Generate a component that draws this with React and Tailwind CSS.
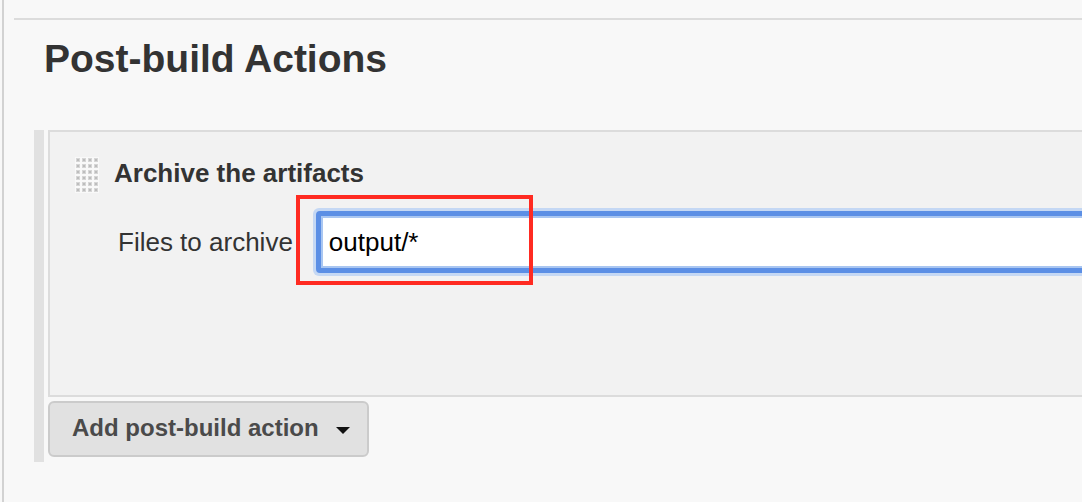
import React from "react";

function Handle() {
  const dots = [];
  for (let r = 0; r < 6; r++) {
    for (let c = 0; c < 4; c++) {
      dots.push(
        <g key={`${r}-${c}`}>
          <rect x={c * 6 + 1} y={r * 6 + 1} width="4" height="4" fill="#d6d6d6" />
          <rect x={c * 6 + 2} y={r * 6 + 2} width="2" height="2" fill="#bdbdbd" />
        </g>
      );
    }
  }
  return (
    <svg width="24" height="36" viewBox="0 0 24 36" className="shrink-0">
      <rect x="0" y="0" width="24" height="36" fill="#f9f9f9" />
      {dots}
    </svg>
  );
}

export default function App() {
  return (
    <div
      className="relative flex w-[1082px] h-[502px] overflow-hidden bg-[#f8f8f8]"
      style={{ fontFamily: '"Liberation Sans", Arial, sans-serif' }}
    >
      <div className="ml-[2px] w-[2px] shrink-0 bg-[#d2d2d2]" />
      <div className="flex min-w-0 flex-1 flex-col pl-[10px] pt-[18px]">
        <div className="h-[2px] bg-[#dcdcdc]" />
        <h1 className="ml-[30px] mt-[19px] text-[39px] font-bold leading-[39px] text-[#333333]">
          Post-build Actions
        </h1>
        <div className="ml-[20px] mt-[52px] flex">
          <div className="w-[10px] shrink-0 bg-[#e1e1e1]" />
          <div className="ml-[4px] flex w-[1100px] shrink-0 flex-col pb-[5px]">
            <div className="h-[267px] border-2 border-[#dcdcdc] bg-[#f2f2f2] pl-[25px] pt-[25px]">
              <div className="flex items-start">
                <Handle />
                <div className="ml-[15px] mt-[3px] text-[26px] font-bold leading-[26px] text-[#333333]">
                  Archive the artifacts
                </div>
              </div>
              <div className="mt-[15px] flex items-center">
                <label className="ml-[43px] text-[26px] leading-[26px] text-[#333333]">
                  Files to archive
                </label>
                <div className="ml-[20px] flex-1 rounded-[6px] bg-[#c5d8f4] p-[3px]">
                  <div className="rounded-[4px] border-[5px] border-[#5c8fe5] bg-[#a9c6f1] p-[2px]">
                    <input
                      readOnly
                      value="output/*"
                      className="block h-[48px] w-full bg-white pl-[6px] text-[26px] leading-[26px] text-black outline-none"
                      style={{ fontFamily: '"Liberation Sans", Arial, sans-serif' }}
                    />
                  </div>
                </div>
              </div>
            </div>
            <button className="mt-[4px] flex h-[56px] w-[321px] items-center rounded-[6px] border-2 border-[#cbcbcb] bg-[#e1e1e1] pl-[22px] text-[24px] font-bold leading-[24px] text-[#4a4a4a]">
              <span className="mb-[3px]">Add post-build action</span>
              <svg width="14" height="7" viewBox="0 0 14 7" className="ml-[17px] mt-[2px]">
                <path d="M0 0 H14 L7 7 Z" fill="#111111" />
              </svg>
            </button>
          </div>
        </div>
      </div>
      <div className="pointer-events-none absolute left-[296px] top-[195px] h-[90px] w-[237px] border-4 border-[#ff2b22]" />
    </div>
  );
}
